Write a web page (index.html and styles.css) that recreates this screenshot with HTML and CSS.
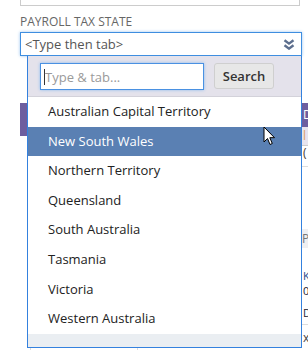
FILE: index.html
```html
<!DOCTYPE html>
<html>
	<head>
		<meta charset="utf-8" />
		<title>Payroll tax state</title>
		<link rel="stylesheet" href="styles.css">
	</head>
	<body>
		<!--上面的表单框-->
		<div class="top-box"></div>

		<div class="field">
			<div class="field-label">Payroll Tax State</div>
			<div class="select">
				<span class="select-text">&lt;Type then tab&gt;</span>
				<svg class="select-icon" width="12" height="11" viewBox="0 0 12 11">
					<path d="M1.5 1.2 L6 4.6 L10.5 1.2" fill="none" stroke="#5d6f8e" stroke-width="2.4" />
					<path d="M1.5 6.2 L6 9.6 L10.5 6.2" fill="none" stroke="#5d6f8e" stroke-width="2.4" />
				</svg>
			</div>

			<!--下拉列表-->
			<div class="dropdown">
				<div class="dropdown-head">
					<div class="search-input"><span class="caret"></span><span class="placeholder">Type &amp; tab...</span></div>
					<div class="search-btn">Search</div>
				</div>
				<ul class="options">
					<li>Australian Capital Territory</li>
					<li class="active">New South Wales</li>
					<li>Northern Territory</li>
					<li>Queensland</li>
					<li>South Australia</li>
					<li>Tasmania</li>
					<li>Victoria</li>
					<li>Western Australia</li>
				</ul>
				<div class="dropdown-foot"></div>
				<svg class="cursor" width="13" height="20" viewBox="0 0 13 20">
					<path d="M1 1 L1 16 L4.5 12.5 L7 18.5 L9.3 17.5 L6.8 11.7 L11.5 11.7 Z" fill="#fff" stroke="#000" stroke-width="1" stroke-linejoin="round" />
				</svg>
			</div>
		</div>

		<!--下拉框下面的页面内容-->
		<div class="bg">
			<div class="bg-head">Details</div>
			<div class="bg-sub">
				<div class="bg-tab"></div>
				<div class="bg-sub-cell">l</div>
			</div>
			<div class="bg-body">
				<div class="bg-row">(</div>
				<div class="bg-space"></div>
				<div class="bg-grey">PT</div>
				<div class="bg-lines">
					<div class="bg-line blue">K<span class="bar"></span></div>
					<div class="bg-line">02</div>
					<div class="bg-line gap">D</div>
				</div>
				<div class="bg-last">
					<div class="bg-cell"></div>
					<div class="bg-cell wide">x</div>
				</div>
			</div>
		</div>
	</body>
</html>
```

FILE: styles.css
```css
*{
	margin: 0;
	padding: 0;
	box-sizing: border-box;
}
html, body{
	width: 308px;
	height: 350px;
	overflow: hidden;
}
body{
	background-color: #fff;
	font-family: "Open Sans", "Liberation Sans", sans-serif;
	color: #222;
}
.top-box{
	height: 6px;
	margin: 0 8px 0 20px;
	border: 1px solid #ccc;
	border-top: none;
}
.field{
	position: relative;
	padding-left: 20px;
}
.field-label{
	margin-top: 8px;
	font-size: 12px;
	line-height: 16px;
	color: #666;
	text-transform: uppercase;
}
.select{
	margin-top: 2px;
	width: 282px;
	height: 24px;
	border: 1px solid #3f8ee0;
	box-shadow: 0 0 3px #9cc5ef;
	display: flex;
	align-items: center;
	justify-content: space-between;
	padding: 0 6px 0 4px;
}
.select-text{
	font-size: 13px;
	line-height: 22px;
	color: #555;
}
.select-icon{
	margin-top: 1px;
}
/*下拉框*/
.dropdown{
	position: absolute;
	top: 100%;
	left: 27px;
	width: 275px;
	border: 1px solid #3481de;
	border-top: none;
	background-color: #fff;
	z-index: 2;
}
.dropdown-head{
	display: flex;
	gap: 10px;
	padding: 7px 12px 6px;
	background-color: #e4e2eb;
	border-bottom: 1px solid #d3d2da;
}
.search-input{
	width: 164px;
	height: 27px;
	border: 1px solid #4a91e2;
	box-shadow: 0 0 3px #8dbcf0;
	background-color: #fff;
	display: flex;
	align-items: center;
	padding-left: 3px;
}
.caret{
	width: 1px;
	height: 16px;
	background-color: #333;
}
.placeholder{
	font-size: 13px;
	color: #9a9a9a;
}
.search-btn{
	width: 60px;
	height: 26px;
	border: 1px solid #cfcfcf;
	border-radius: 3px;
	background-color: #e7e7e7;
	font-size: 13px;
	font-weight: 600;
	color: #333;
	text-align: center;
	line-height: 24px;
}
.options{
	list-style: none;
}
.options li{
	height: 29.6px;
	line-height: 29.6px;
	padding-left: 20px;
	font-size: 13px;
	color: #222;
}
.options li.active{
	background-color: #5a80b3;
	color: #fff;
}
.dropdown-foot{
	height: 13.2px;
	background-color: #eaeef2;
}
/*鼠标指针*/
.cursor{
	position: absolute;
	left: 235px;
	top: 70px;
}
/*背景内容*/
.bg{
	margin: 47px 0 0 20px;
	font-size: 12px;
	white-space: nowrap;
	overflow: hidden;
}
.bg-head{
	height: 24px;
	line-height: 24px;
	background-color: #6d5e9f;
	color: #fff;
	padding-left: 283px;
}
.bg-sub{
	display: flex;
	height: 19px;
}
.bg-tab{
	width: 8px;
	height: 9px;
	background-color: #6d5e9f;
}
.bg-sub-cell{
	flex: 1;
	background-color: #e7e4ee;
	border-bottom: 1px solid #ccc;
	padding-left: 275px;
	line-height: 18px;
	color: #d9a066;
}
/*下拉框左边是空白的*/
.bg-body{
	margin-left: 8px;
}
.bg-row{
	height: 21px;
	padding-left: 275px;
	line-height: 14px;
	color: #4a3a2a;
	border-bottom: 1px solid #ddd;
}
.bg-space{
	height: 62px;
}
.bg-grey{
	height: 19px;
	line-height: 19px;
	background-color: #efeff1;
	padding-left: 274px;
	color: #777;
}
.bg-lines{
	padding: 20px 0 0 275px;
	height: 77px;
	border-bottom: 1px solid #ddd;
	font-size: 11px;
	line-height: 15px;
	color: #223;
}
.bg-line.blue{
	color: #2c4a8a;
	display: flex;
	align-items: center;
}
.bar{
	width: 2px;
	height: 11px;
	margin-left: 1px;
	background-color: #e08a3a;
}
.bg-line.gap{
	margin-top: 7px;
}
.bg-last{
	display: flex;
	margin-left: 2px;
	height: 27px;
}
.bg-cell{
	width: 107px;
	border-left: 1px solid #ddd;
}
.bg-cell.wide{
	flex: 1;
	padding: 6px 0 0 165px;
	line-height: 14px;
	color: #444;
}
```
